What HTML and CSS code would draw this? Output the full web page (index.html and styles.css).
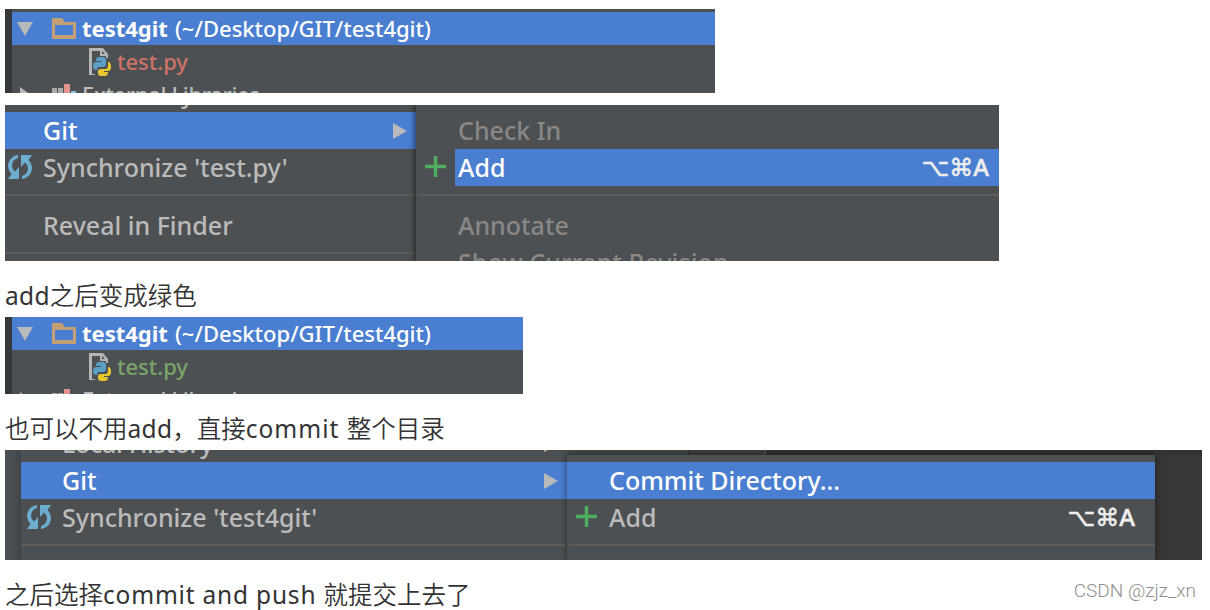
FILE: index.html
```
<!DOCTYPE html>
<html lang="zh-CN">
<head>
<meta charset="utf-8">
<meta name="viewport" content="width=device-width, initial-scale=1.0">
<title>test4git</title>
<link rel="stylesheet" href="styles.css">
</head>
<body>

<!-- shared icons -->
<svg class="sprite" width="0" height="0">
  <symbol id="folder" viewBox="0 0 26 22">
    <path fill="#c2a074" fill-rule="evenodd" d="M1 0h10l3 4h11v17H1zM4 7v10h18V7z"/>
  </symbol>
  <symbol id="python" viewBox="0 0 24 28">
    <path d="M2.500 27V1.500H15" fill="none" stroke="#b3b5b6" stroke-width="3"/>
    <path d="M2 26.500h5" stroke="#b3b5b6"/>
    <path fill="#b3b5b6" d="M12 0h3l5 6v4h-2V8h-6z"/>
    <path fill="#4c5052" d="M14 3l3 3h-3z"/>
    <path fill="#5b9fc5" d="M11 9h4q3 0 3 3v4q0 3-3 3h-4q-2 0-2 3H8q-3 0-3-4t3-4h5v-1H8v-1q0-3 3-3z"/>
    <path fill="#e8c62f" d="M20 14q3 0 3 4.500T20 23h-4v1h4q0 4-3 4h-4q-3 0-3-3v-2q0-2 3-2h4q3 0 3-3z"/>
  </symbol>
  <symbol id="sync" viewBox="0 0 26 26">
    <g id="half">
      <path d="M11 1C4 2 1 7 1 13q.5 4 3.500 7L1 25h11V13L8 17.500Q5 15 5 12q0-6 6-8z"/>
    </g>
    <use href="#half" transform="rotate(180 13 13)"/>
  </symbol>
  <symbol id="plus" viewBox="0 0 22 22">
    <path fill="#4fae60" d="M9.200 0h3.600v9.200H22v3.600h-9.200V22H9.200v-9.200H0V9.200h9.200z"/>
  </symbol>
</svg>

<main class="article">

  <!-- Project tree, file not added yet -->
  <div class="tree tree-wide">
    <div class="tree-row selected">
      <span class="arrow-down"></span>
      <svg class="folder"><use href="#folder"/></svg>
      <b>test4git</b><span class="path">(~/Desktop/GIT/test4git)</span>
    </div>
    <div class="tree-row file red">
      <svg class="python"><use href="#python"/></svg>
      <span class="name">test.py</span>
    </div>
    <div class="tree-row libs">
      <span class="arrow-right"></span>
      <span class="bars"><i></i><i></i><i></i><i></i></span>
      <span class="lib-name">External Libraries</span>
    </div>
  </div>

  <!-- Git > Add -->
  <div class="shot menu-add">
    <div class="menu">
      <div class="item cut"><span>Local History</span></div>
      <div class="item selected"><span>Git</span><i class="more"></i></div>
      <div class="item"><svg class="sync"><use href="#sync"/></svg><span>Synchronize 'test.py'</span></div>
      <hr>
      <div class="item"><span>Reveal in Finder</span></div>
      <hr>
    </div>
    <div class="menu submenu">
      <div class="item off"><span>Check In</span></div>
      <div class="item add"><svg class="plus"><use href="#plus"/></svg><div class="bar"><span>Add</span><kbd>⌥⌘A</kbd></div></div>
      <hr>
      <div class="item off"><span>Annotate</span></div>
      <div class="item off"><span class="revision">Show Current Revision</span></div>
    </div>
  </div>

  <p class="text-green"><span class="en-add">add</span>之后变成绿色</p>

  <!-- Project tree, file added -->
  <div class="tree tree-narrow">
    <div class="tree-row selected">
      <span class="arrow-down"></span>
      <svg class="folder"><use href="#folder"/></svg>
      <b>test4git</b><span class="path">(~/Desktop/GIT/test4git)</span>
    </div>
    <div class="tree-row file green">
      <svg class="python"><use href="#python"/></svg>
      <span class="name">test.py</span>
    </div>
    <div class="tree-row libs">
      <span class="arrow-right"></span>
      <span class="bars"><i></i><i></i><i></i><i></i></span>
      <span class="lib-name">External Libraries</span>
    </div>
  </div>

  <p class="text-commit">也可以不用<span class="en-add">add</span>，直接<span class="en-commit">commit </span>整个目录</p>

  <!-- Git > Commit Directory -->
  <div class="shot menu-commit">
    <div class="gutter"></div>
    <div class="menu">
      <div class="item cut"><span>Local History</span><i class="more"></i></div>
      <div class="item selected"><span>Git</span><i class="more"></i></div>
      <div class="item"><svg class="sync"><use href="#sync"/></svg><span>Synchronize 'test4git'</span></div>
      <hr>
    </div>
    <div class="right">
      <div class="editor"></div>
      <div class="menu submenu">
        <div class="item selected"><span>Commit Directory...</span></div>
        <div class="item add"><svg class="plus"><use href="#plus"/></svg><div class="bar"><span>Add</span><kbd>⌥⌘A</kbd></div></div>
        <hr>
      </div>
    </div>
  </div>

  <div class="last">
    <p>之后选择<span class="en-push">commit and push </span>就提交上去了</p>
    <span class="watermark">CSDN @zjz_xn</span>
  </div>

</main>
</body>
</html>
```
FILE: styles.css
```
* {
  box-sizing: border-box;
}

body {
  margin: 0;
  background: #fff;
  overflow: hidden;
}

.sprite {
  display: block;
}

.article {
  padding: 9px 5px 0;
  color: #333;
  font-family: "Noto Sans", "Noto Sans CJK SC", sans-serif;
}

p {
  margin: 0;
  font: 24.5px/36px "Noto Sans", "Noto Sans CJK SC", sans-serif;
  font-weight: 350;
  white-space: pre;
}

.en-add {
  font-weight: 400;
  letter-spacing: .3px;
}

.en-commit {
  font-weight: 400;
  letter-spacing: 1px;
}

.en-push {
  font-weight: 400;
  letter-spacing: .8px;
}

/* project tree */
.tree {
  height: 84px;
  overflow: hidden;
  padding-top: 3px;
  border-left: 7px solid #36393a;
  background: #4c5052;
  color: #bbb;
  font: 500 22px/33px "Noto Sans", sans-serif;
}

.tree-wide {
  width: 710px;
}

.tree-narrow {
  width: 518px;
  height: 77px;
  padding-top: 0;
}

.tree-row {
  display: flex;
  align-items: center;
  height: 33px;
  white-space: nowrap;
}

.selected {
  background: #4a7ed1;
  color: #fff;
}

.arrow-down {
  margin-left: 5px;
  border: 8px solid transparent;
  border-top: 14px solid #b7b9ba;
  border-bottom: 0;
}

.folder {
  width: 26px;
  height: 22px;
  margin-left: 18px;
}

.tree b {
  width: 93px;
  margin-left: 5px;
}

.file {
  padding-left: 76px;
}

.python {
  width: 24px;
  height: 28px;
}

.name {
  margin-left: 5px;
}

.red {
  color: #cf7368;
}

.green {
  color: #7aa568;
}

.arrow-right {
  margin-left: 8px;
  border: 8px solid transparent;
  border-left: 11px solid #b7b9ba;
  border-right: 0;
}

.bars {
  display: flex;
  align-items: flex-end;
  width: 25px;
  height: 22px;
  margin-left: 21px;
}

.bars i {
  width: 5px;
  height: 18px;
  margin-right: 1px;
  background: #aaa;
}

.bars i:nth-child(3) {
  width: 7px;
  height: 22px;
  background: #e4938c;
}

.bars i:nth-child(4) {
  height: 15px;
  background: #83c4dc;
}

.lib-name {
  margin-left: 5px;
  letter-spacing: -.35px;
}

/* context menus */
.shot {
  display: flex;
  overflow: hidden;
  background: #4c5052;
}

.menu {
  color: #bbb;
  font: 500 25px/37px "Noto Sans", sans-serif;
}

.item {
  display: flex;
  align-items: center;
  height: 37px;
  padding-left: 38px;
  white-space: nowrap;
}

.cut {
  letter-spacing: -.3px;
}

.more {
  margin: 0 9px 0 auto;
  border: 8px solid transparent;
  border-left: 14px solid #b7b9ba;
  border-right: 0;
}

.sync {
  width: 26px;
  height: 26px;
  margin: -2px 10px 0 -36px;
  fill: #6dadd0;
}

hr {
  height: 2px;
  margin: 8px 2px 11px 0;
  border: 0;
  background: #5d5d5d;
}

.menu-add {
  width: 994px;
  height: 156px;
  margin-top: 12px;
}

.menu-add .menu:first-child {
  width: 411px;
  margin-top: -30px;
}

.menu-add .submenu {
  flex: 1;
  padding-top: 7px;
  box-shadow: -2px 0 5px rgba(0, 0, 0, .45);
}

.submenu .item {
  padding-left: 42px;
}

.submenu hr {
  margin-right: 0;
  margin-left: 2px;
}

.off {
  color: #888;
}

.revision {
  letter-spacing: .1px;
}

.submenu .add {
  padding-left: 9px;
}

.plus {
  width: 21px;
  height: 21px;
  margin: -2px 9px 0 0;
}

.bar {
  display: flex;
  flex: 1;
  justify-content: space-between;
  padding: 0 10px 0 3px;
}

.menu-add .bar {
  background: #4a7ed1;
  color: #fff;
}

kbd {
  color: #eee;
  font: 500 24px/36px "Noto Sans", "DejaVu Sans", sans-serif;
  -webkit-text-stroke: .5px;
}

.menu-commit {
  width: 1197px;
  height: 110px;
  background: #373737;
}

.gutter {
  width: 16px;
  background: linear-gradient(to right, #4c5052 50%, #404345);
}

.menu-commit .menu {
  background: #4c5052;
}

.menu-commit > .menu {
  width: 546px;
  margin-top: -25px;
}

.menu-commit > .menu .item {
  padding-left: 41px;
}

.right {
  flex: 1;
}

.editor {
  height: 5px;
  background: linear-gradient(to right, #45494b 121px, #303234 121px 122px, #3e4143 122px 198px, #555 198px 199px, #323232 199px);
}

.menu-commit .submenu {
  width: 588px;
  height: 105px;
  padding-top: 7px;
  box-shadow: 0 0 7px rgba(0, 0, 0, .5);
}

.menu-commit .bar {
  padding-right: 20px;
}

.text-green {
  margin-top: 17px;
  height: 39px;
}

.text-commit {
  margin-top: 17px;
  height: 39px;
}

.last {
  display: flex;
  justify-content: space-between;
  margin-top: 17px;
}

.watermark {
  padding-right: 9px;
  color: #8f8f8f;
  font: 300 19px/28px Roboto, sans-serif;
}
```
